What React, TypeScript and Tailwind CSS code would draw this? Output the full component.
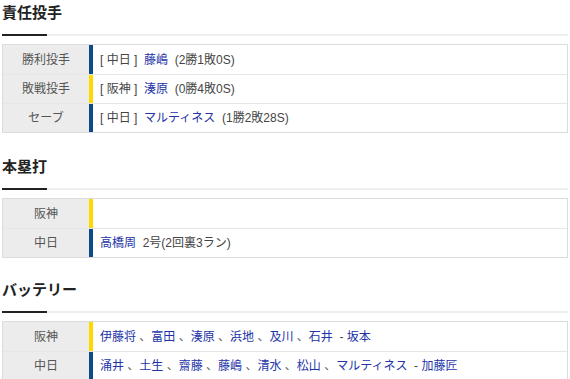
const chunichi = "bg-[#0b4a8b]";
const hanshin = "bg-[#ffd800]";

type Row = { label: string; bar: string; content: React.ReactNode };

function Name({ children }: { children: React.ReactNode }) {
  return <span className="text-[#2233a8]">{children}</span>;
}

function SectionTitle({ children }: { children: React.ReactNode }) {
  return (
    <div className="relative border-b-2 border-[#eeeeee] pb-[9px]">
      <h2 className="text-[15px] font-bold leading-[24px] text-[#222]">{children}</h2>
      <div className="absolute bottom-[-2px] left-0 h-[2px] w-[45px] bg-[#222]" />
    </div>
  );
}

function Table({ rows }: { rows: Row[] }) {
  return (
    <div className="mt-[8px] border border-[#dcdcdc]">
      {rows.map((r, i) => (
        <div key={i} className={`flex h-[29px] ${i > 0 ? "border-t border-[#e6e6e6]" : ""}`}>
          <div className="flex w-[86px] items-center justify-center bg-[#ececec] text-[#555]">{r.label}</div>
          <div className={`w-[4px] ${r.bar}`} />
          <div className="flex flex-1 items-center whitespace-pre pl-[7px] text-[#444]">{r.content}</div>
        </div>
      ))}
    </div>
  );
}

const sep = <span className="text-[#666]"> 、</span>;

export default function App() {
  return (
    <div className="w-[570px] bg-white px-[2px] pt-[1px] text-[12px] leading-none font-['Liberation_Sans','Noto_Sans_CJK_JP',sans-serif]">
      <SectionTitle>責任投手</SectionTitle>
      <Table
        rows={[
          { label: "勝利投手", bar: chunichi, content: <>[ 中日 ]  <Name>藤嶋</Name>  (2勝1敗0S)</> },
          { label: "敗戦投手", bar: hanshin, content: <>[ 阪神 ]  <Name>湊原</Name>  (0勝4敗0S)</> },
          { label: "セーブ", bar: chunichi, content: <>[ 中日 ]  <Name>マルティネス</Name>  (1勝2敗28S)</> },
        ]}
      />

      <div className="mt-[22px]">
        <SectionTitle>本塁打</SectionTitle>
        <Table
          rows={[
            { label: "阪神", bar: hanshin, content: null },
            { label: "中日", bar: chunichi, content: <><Name>高橋周</Name>  2号(2回裏3ラン)</> },
          ]}
        />
      </div>

      <div className="mt-[20px]">
        <SectionTitle>バッテリー</SectionTitle>
        <Table
          rows={[
            {
              label: "阪神",
              bar: hanshin,
              content: (
                <>
                  <Name>伊藤将</Name>{sep}<Name>富田</Name>{sep}<Name>湊原</Name>{sep}<Name>浜地</Name>{sep}
                  <Name>及川</Name>{sep}<Name>石井</Name>  - <Name>坂本</Name>
                </>
              ),
            },
            {
              label: "中日",
              bar: chunichi,
              content: (
                <>
                  <Name>涌井</Name>{sep}<Name>土生</Name>{sep}<Name>齋藤</Name>{sep}<Name>藤嶋</Name>{sep}
                  <Name>清水</Name>{sep}<Name>松山</Name>{sep}<Name>マルティネス</Name>  - <Name>加藤匠</Name>
                </>
              ),
            },
          ]}
        />
      </div>
    </div>
  );
}
